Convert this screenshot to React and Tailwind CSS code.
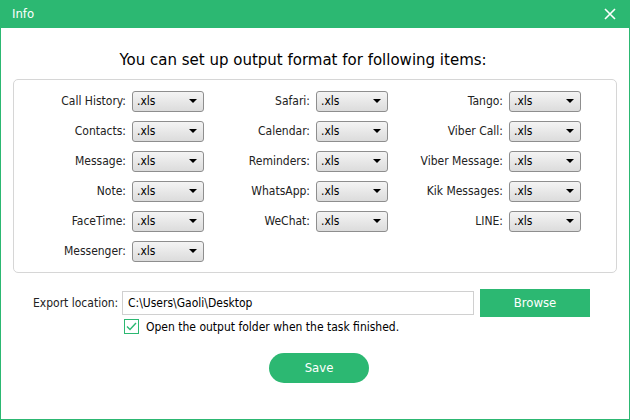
import React from 'react'

const col1 = ['Call History', 'Contacts', 'Message', 'Note', 'FaceTime', 'Messenger']
const col2 = ['Safari', 'Calendar', 'Reminders', 'WhatsApp', 'WeChat']
const col3 = ['Tango', 'Viber Call', 'Viber Message', 'Kik Messages', 'LINE']

const Select = () => (
  <div className="w-[72px] h-[21px] border border-[#8e8e8e] rounded-[3px] bg-gradient-to-b from-[#f4f4f4] to-[#dcdcdc] flex items-center justify-between pl-[4px] pr-[6px]">
    <span className="text-[12px] text-black">.xls</span>
    <span className="w-0 h-0 border-l-[4px] border-r-[4px] border-t-[4px] border-l-transparent border-r-transparent border-t-black"></span>
  </div>
)

const Column = ({ items, labelW }) => (
  <div className="flex flex-col gap-[9px]">
    {items.map((name) => (
      <div key={name} className="flex items-center gap-[6px]">
        <span className="text-[12px] text-[#222] text-right" style={{ width: labelW }}>{name}:</span>
        <Select />
      </div>
    ))}
  </div>
)

const App = () => {
  return (
    <div className="w-[630px] h-[420px] bg-white border border-[#2cb872] border-t-0 flex flex-col" style={{ fontFamily: '"DejaVu Sans Condensed", "Liberation Sans", sans-serif' }}>
      {/* Title bar */}
      <div className="h-[28px] bg-[#2cb872] flex items-center justify-between pl-[12px] pr-[14px] -mx-[1px]">
        <span className="text-white text-[13px]">Info</span>
        <svg width="12" height="12" viewBox="0 0 12 12">
          <path d="M1 1L11 11M11 1L1 11" stroke="white" strokeWidth="1.6" />
        </svg>
      </div>

      <div className="text-center text-[15px] text-black mt-[21px] pr-[24px] font-['DejaVu_Sans',sans-serif]">You can set up output format for following items:</div>

      {/* Format panel */}
      <div className="mx-[12px] mt-[7px] h-[194px] border border-[#d6d6d6] rounded-[5px] flex pt-[11px] pl-[20px]">
        <Column items={col1} labelW={92} />
        <div className="ml-[14px]"><Column items={col2} labelW={92} /></div>
        <div className="ml-[10px]"><Column items={col3} labelW={105} /></div>
      </div>

      {/* Export location */}
      <div className="flex items-center mt-[16px] pl-[32px]">
        <span className="text-[12px] text-[#222] w-[89px]">Export location:</span>
        <div className="w-[352px] h-[24px] border border-[#d0d0d0] flex items-center px-[5px] text-[12px] text-black">C:\Users\Gaoli\Desktop</div>
        <button className="ml-[6px] w-[110px] h-[28px] bg-[#2cb872] text-white text-[13px]">Browse</button>
      </div>
      <div className="flex items-center mt-[1px] pl-[123px] gap-[7px]">
        <div className="w-[15px] h-[15px] border border-[#2cb872] flex items-center justify-center">
          <svg width="11" height="9" viewBox="0 0 11 9">
            <path d="M1 4.5L4 7.5L10 1" stroke="#2cb872" strokeWidth="1.4" fill="none" />
          </svg>
        </div>
        <span className="text-[12px] text-black">Open the output folder when the task finished.</span>
      </div>

      <div className="flex justify-center mt-[17px] pl-[8px]">
        <button className="w-[100px] h-[30px] rounded-full bg-[#2cb872] text-white text-[13px]">Save</button>
      </div>
    </div>
  )
}

export default App
